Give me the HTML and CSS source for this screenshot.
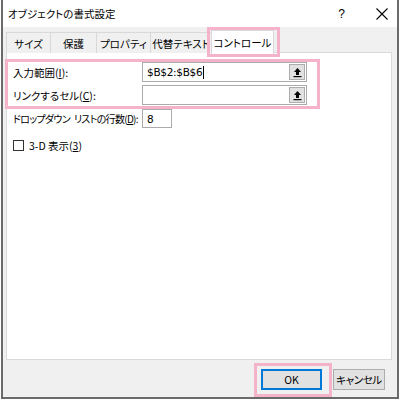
FILE: index.html
```html
<!DOCTYPE html>
<html lang="ja">
<head>
<meta charset="utf-8">
<title>オブジェクトの書式設定</title>
<link rel="stylesheet" href="styles.css">
</head>
<body>
<div class="dialog">
  <div class="titlebar">
    <span class="title">オブジェクトの書式設定</span>
    <span class="help">?</span>
    <svg class="close" width="12" height="12" viewBox="0 0 12 12"><path d="M0.5 0.5 L11.5 11.5 M11.5 0.5 L0.5 11.5" stroke="#000" stroke-width="1.1" fill="none"/></svg>
  </div>
  <div class="body">
    <div class="tabs">
      <div class="tab t1">サイズ</div>
      <div class="tab t2">保護</div>
      <div class="tab t3">プロパティ</div>
      <div class="tab t4">代替テキスト</div>
      <div class="tab t5 active">コントロール</div>
    </div>
    <div class="panel">
      <div class="form">
        <label class="lbl">入力範囲(<u>I</u>):</label>
        <div class="field wide"><span class="val">$B$2:$B$6</span><span class="caret"></span>
          <span class="pick"><svg width="11" height="11" viewBox="0 0 11 11"><path d="M5.5 1 L9 5 L7 5 L7 8 L4 8 L4 5 L2 5 Z" fill="#000"/><rect x="1.5" y="9" width="8" height="1.2" fill="#000"/></svg></span>
        </div>
        <label class="lbl">リンクするセル(<u>C</u>):</label>
        <div class="field wide">
          <span class="pick"><svg width="11" height="11" viewBox="0 0 11 11"><path d="M5.5 1 L9 5 L7 5 L7 8 L4 8 L4 5 L2 5 Z" fill="#000"/><rect x="1.5" y="9" width="8" height="1.2" fill="#000"/></svg></span>
        </div>
        <label class="lbl long">ドロップダウン<span class="sp"> </span>リストの行数(<u>D</u>):</label>
        <div class="field small"><span class="val">8</span></div>
      </div>
      <div class="check">
        <span class="box"></span>
        <span>3-D 表示(<u>3</u>)</span>
      </div>
    </div>
    <div class="footer">
      <button class="btn ok">OK</button>
      <button class="btn cancel">キャンセル</button>
    </div>
  </div>
  <div class="hl hl-tab"></div>
  <div class="hl hl-main"></div>
  <div class="hl hl-ok"></div>
</div>
</body>
</html>
```
FILE: styles.css
```css
html, body {
  margin: 0;
  padding: 0;
  background: #fff;
}
body {
  width: 400px;
  height: 399px;
  overflow: hidden;
  font-family: "Noto Sans CJK JP", "Noto Sans", sans-serif;
  font-size: 10.5px;
  font-feature-settings: "palt";
  color: #000;
}
.dialog {
  position: relative;
  margin: 0 1px;
  height: 399px;
  box-sizing: border-box;
  border-left: 2px solid #6a6a6a;
  border-right: 2px solid #6a6a6a;
  border-bottom: 2px solid #6a6a6a;
  display: flex;
  flex-direction: column;
}
.titlebar {
  height: 27px;
  background: #fff;
  display: flex;
  align-items: center;
  padding-left: 5px;
  flex: none;
}
.title {
  font-size: 10.5px;
  flex: 1;
}
.help {
  font-family: "Liberation Sans", sans-serif;
  font-size: 12px;
  margin-right: 31px;
}
.close {
  margin-right: 9px;
}
.body {
  flex: 1;
  background: #f0f0f0;
  padding: 3px 5px 0 3px;
  display: flex;
  flex-direction: column;
}
.tabs {
  display: flex;
  align-items: flex-end;
  height: 23px;
  position: relative;
  z-index: 2;
}
.tab {
  box-sizing: border-box;
  height: 21px;
  border: 1px solid #d9d9d9;
  border-bottom: none;
  margin-right: -1px;
  display: flex;
  align-items: center;
  justify-content: center;
  background: #f0f0f0;
  font-size: 10.5px;
  white-space: nowrap;
  padding-top: 1px;
}
.t1 { width: 45px; }
.t2 { width: 47px; }
.t3 { width: 55px; }
.t4 { width: 62px; }
.t5 { width: 63px; }
.tab.active {
  height: 24px;
  background: #fff;
  margin-bottom: -1px;
  padding-top: 0;
}
.panel {
  box-sizing: border-box;
  height: 308px;
  background: #fff;
  border: 1px solid #d9d9d9;
  margin-top: -1px;
  padding: 9px 0 0 6px;
  flex: none;
}
.form {
  display: grid;
  grid-template-columns: 129px auto;
  row-gap: 3px;
  align-items: center;
}
.lbl {
  white-space: nowrap;
}
.long {
  font-size: 10px;
  letter-spacing: -0.7px;
}
.sp {
  display: inline-block;
  width: 4px;
}
.field {
  box-sizing: border-box;
  height: 20px;
  border: 1px solid #ababab;
  background: #fff;
  display: flex;
  align-items: center;
  padding-left: 4px;
  position: relative;
}
.wide { width: 165px; }
.small { width: 30px; height: 19px; margin-top: 1px; }
.val {
  font-family: "DejaVu Sans", sans-serif;
  font-size: 10.5px;
  letter-spacing: -0.3px;
}
.caret {
  width: 1px;
  height: 13px;
  background: #000;
  margin-left: 1px;
}
.pick {
  position: absolute;
  right: 1px;
  top: 1px;
  width: 16px;
  height: 16px;
  box-sizing: border-box;
  background: #e1e1e1;
  border: 1px solid #adadad;
  display: flex;
  align-items: center;
  justify-content: center;
}
.check {
  display: flex;
  align-items: center;
  margin-top: 10px;
  gap: 5px;
}
.box {
  width: 11px;
  height: 11px;
  box-sizing: border-box;
  border: 1px solid #333;
  background: #fff;
}
.footer {
  display: flex;
  justify-content: flex-end;
  padding: 9px 7px 0 0;
  gap: 11px;
}
.btn {
  box-sizing: border-box;
  height: 21px;
  font-family: "Noto Sans CJK JP", "Noto Sans", sans-serif;
  font-feature-settings: "palt";
  font-size: 10.5px;
  white-space: nowrap;
  background: #e1e1e1;
  border: 1px solid #adadad;
  padding: 0;
  color: #000;
}
.ok {
  width: 61px;
  border: 2px solid #0078d7;
}
.cancel {
  width: 52px;
  letter-spacing: -0.4px;
}
.hl {
  position: absolute;
  border: 3px solid #f4b3cb;
  box-sizing: border-box;
  pointer-events: none;
  z-index: 5;
}
.hl-tab { left: 204px; top: 27px; width: 73px; height: 30px; }
.hl-main { left: 2px; top: 59px; width: 315px; height: 50px; }
.hl-ok { left: 251px; top: 363px; width: 78px; height: 34px; }
```
